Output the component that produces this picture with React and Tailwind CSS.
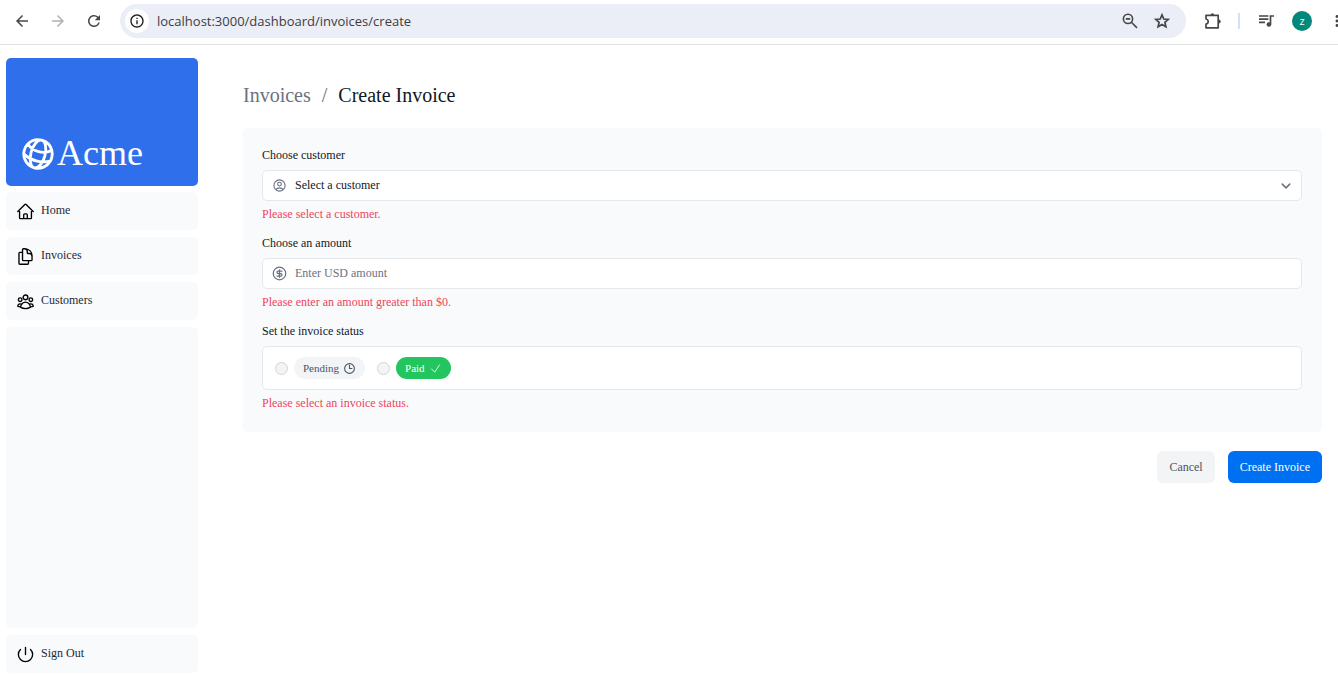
import {
  HiOutlineHome,
  HiOutlineDocumentDuplicate,
  HiOutlineUserGroup,
  HiOutlinePower,
  HiOutlineUserCircle,
  HiOutlineClock,
  HiOutlineCheck,
  HiOutlineChevronDown,
  HiOutlineGlobeAlt,
} from 'react-icons/hi2';
import { CircleDollarSign } from 'lucide-react';
import {
  MdArrowBack,
  MdArrowForward,
  MdRefresh,
  MdInfoOutline,
  MdMoreVert,
} from 'react-icons/md';

function PuzzleIcon() {
  return (
    <svg viewBox="0 0 18 18" className="size-[18px]" fill="none" stroke="currentColor" strokeWidth="1.7" strokeLinejoin="round" aria-hidden="true">
      <path d="M2 3.3H14.2V15.8H2V12.2C3.5 11.9 4.2 10.9 4.2 9.6S3.5 7.3 2 7Z" />
      <path d="M6.6 3a1.8 1.8 0 0 1 3.6 0ZM14.8 7.6a1.9 1.9 0 0 1 0 3.8Z" fill="currentColor" stroke="none" />
    </svg>
  );
}

function ZoomOutIcon() {
  return (
    <svg viewBox="0 0 18 18" className="size-[18px]" fill="none" stroke="currentColor" strokeWidth="1.6" aria-hidden="true">
      <circle cx="7" cy="6.9" r="4.6" />
      <path d="M10.4 10.3L16 15.9M4.8 6.9H9.2" />
    </svg>
  );
}

function StarIcon() {
  return (
    <svg viewBox="0 0 18 18" className="size-[18px]" fill="none" stroke="currentColor" strokeWidth="1.7" aria-hidden="true">
      <path d="M9 2.9L10.8 7L15.2 7.4L11.9 10.3L12.9 14.7L9 12.4L5.1 14.7L6.1 10.3L2.8 7.4L7.2 7Z" />
    </svg>
  );
}

function MediaIcon() {
  return (
    <svg viewBox="0 0 19 18" className="h-[18px] w-[19px]" fill="none" stroke="currentColor" strokeWidth="1.7" aria-hidden="true">
      <path d="M2 4H11.4M2 7.2H11.4M2 10.4H8M13.5 12.5V4H17" />
      <circle cx="11.9" cy="12.5" r="2.3" fill="currentColor" stroke="none" />
    </svg>
  );
}

function BrowserBar() {
  return (
    <header className="flex h-[45px] shrink-0 items-center overflow-hidden border-b border-[#dfe0e2] pb-[2px] pl-[13px] text-[#474747]">
      <button aria-label="Back" className="shrink-0"><MdArrowBack className="size-[18px]" /></button>
      <button aria-label="Forward" className="ml-[18px] shrink-0 text-[#b0b0b0]"><MdArrowForward className="size-[18px]" /></button>
      <button aria-label="Reload" className="ml-[18px] shrink-0"><MdRefresh className="size-[18px]" /></button>
      <div className="ml-[17px] flex h-[34px] flex-1 items-center rounded-full bg-[#ebeef7] pr-[15px] pl-[5px]">
        <button aria-label="Site information" className="flex size-6 shrink-0 items-center justify-center rounded-full bg-white text-[#1f1f1f]">
          <MdInfoOutline className="size-4" />
        </button>
        <input
          aria-label="Address"
          defaultValue="localhost:3000/dashboard/invoices/create"
          className="ml-2 min-w-0 flex-1 bg-transparent pt-px font-['Open_Sans','Noto_Sans',sans-serif] text-[13px] text-[#3c3d41] outline-none"
        />
        <button aria-label="Zoom out" className="shrink-0"><ZoomOutIcon /></button>
        <button aria-label="Bookmark" className="ml-[14px] shrink-0"><StarIcon /></button>
      </div>
      <button aria-label="Extensions" className="ml-[18px] shrink-0"><PuzzleIcon /></button>
      <span className="ml-4 h-4 w-[2px] shrink-0 bg-[#d0e1fb]" />
      <button aria-label="Media" className="ml-[17px] shrink-0"><MediaIcon /></button>
      <button aria-label="Profile" className="ml-4 flex size-5 shrink-0 items-center justify-center rounded-full bg-[#00897b] font-['Open_Sans',sans-serif] text-[11px] text-white">z</button>
      <button aria-label="Menu" className="-mr-2 ml-[16px] shrink-0"><MdMoreVert className="size-[18px]" /></button>
    </header>
  );
}

const links = [
  { name: 'Home', icon: HiOutlineHome },
  { name: 'Invoices', icon: HiOutlineDocumentDuplicate },
  { name: 'Customers', icon: HiOutlineUserGroup },
];

function Sidebar() {
  return (
    <nav className="flex w-48 shrink-0 flex-col">
      <a href="#" className="mb-[6px] flex h-32 items-end rounded-[5px] bg-[#2f6feb] px-4 pb-[13px] text-white">
        <HiOutlineGlobeAlt className="size-[38px] -ml-[3px] rotate-[15deg] stroke-[1.8]" />
        <span className="text-[36px] leading-10">Acme</span>
      </a>
      <div className="flex flex-1 flex-col gap-[7px]">
        {links.map(({ name, icon: Icon }) => (
          <a key={name} href="#" className="flex h-[38px] items-center gap-[6px] rounded-[5px] bg-[#f9fafb] px-[10px] text-[12px] text-gray-800">
            <Icon className="size-[19px] stroke-[1.7] text-black" />
            <span className="pb-[2px]">{name}</span>
          </a>
        ))}
        <div className="flex-1 rounded-[5px] bg-[#f9fafb]" />
        <button className="flex h-[38px] items-center gap-[6px] rounded-[5px] bg-[#f9fafb] px-[10px] text-[12px] text-gray-800">
          <HiOutlinePower className="size-[19px] stroke-[1.7] text-black" />
          <span className="pb-[2px]">Sign Out</span>
        </button>
      </div>
    </nav>
  );
}

function ErrorText({ children }) {
  return <p className="mt-[5px] text-[12px] leading-4 text-[#ef4460]">{children}</p>;
}

function InvoiceForm() {
  return (
    <form onSubmit={(e) => e.preventDefault()}>
      <div className="flex flex-col gap-[13px] rounded-[5px] bg-[#f9fafb] pt-[19px] pr-5 pb-[21px] pl-[19px] text-[12px] leading-4 text-gray-900">
        <div>
          <label htmlFor="customer" className="block">Choose customer</label>
          <div className="mt-[7px] flex h-[31px] items-center rounded-[5px] border border-gray-200 bg-white px-[9px]">
            <HiOutlineUserCircle className="size-[15px] shrink-0 stroke-[1.8] text-gray-500" />
            <select id="customer" defaultValue="" className="ml-2 flex-1 appearance-none bg-transparent pb-[2px] outline-none">
              <option value="">Select a customer</option>
            </select>
            <HiOutlineChevronDown className="size-3 shrink-0 stroke-3 text-gray-500" />
          </div>
          <ErrorText>Please select a customer.</ErrorText>
        </div>
        <div>
          <label htmlFor="amount" className="block">Choose an amount</label>
          <div className="mt-[7px] flex h-[31px] items-center rounded-[5px] border border-gray-200 bg-white px-[9px]">
            <CircleDollarSign className="size-[15px] shrink-0 text-gray-500" />
            <input id="amount" placeholder="Enter USD amount" className="ml-2 flex-1 bg-transparent pb-px outline-none placeholder:text-gray-500" />
          </div>
          <ErrorText>Please enter an amount greater than $0.</ErrorText>
        </div>
        <fieldset>
          <legend>Set the invoice status</legend>
          <div className="mt-[7px] flex h-11 items-center rounded-[5px] border border-gray-200 bg-white px-3">
            <input id="pending" type="radio" name="status" className="size-[13px] appearance-none rounded-full border border-gray-300 bg-gray-100" />
            <label htmlFor="pending" className="ml-[6px] flex h-[22px] items-center gap-1 rounded-full bg-gray-100 px-[9px] text-[11px] text-gray-600">
              Pending <HiOutlineClock className="size-[13px] stroke-2" />
            </label>
            <input id="paid" type="radio" name="status" className="ml-3 size-[13px] appearance-none rounded-full border border-gray-300 bg-gray-100" />
            <label htmlFor="paid" className="ml-[6px] flex h-[22px] items-center gap-1 rounded-full bg-[#22c55e] px-[9px] text-[11px] text-white">
              Paid <HiOutlineCheck className="size-[13px]" />
            </label>
          </div>
          <ErrorText>Please select an invoice status.</ErrorText>
        </fieldset>
      </div>
      <div className="mt-[19px] flex justify-end gap-[13px] text-[12px]">
        <a href="#" className="flex h-8 items-center rounded-md bg-gray-100 px-3 text-gray-600">Cancel</a>
        <button type="submit" className="flex h-8 items-center rounded-md bg-[#0070f3] px-3 text-white">Create Invoice</button>
      </div>
    </form>
  );
}

export default function App() {
  return (
    <div className="flex min-h-screen flex-col bg-white font-['Liberation_Serif',serif]">
      <BrowserBar />
      <div className="flex flex-1 gap-[45px] pt-[13px] pr-4 pb-[2px] pl-[6px]">
        <Sidebar />
        <main className="min-w-0 flex-1 pt-6">
          <nav aria-label="Breadcrumb" className="mb-[20px] flex gap-[11px] text-[20px] leading-[26px] text-gray-500">
            <a href="#">Invoices</a>
            <span>/</span>
            <a href="#" className="text-gray-900">Create Invoice</a>
          </nav>
          <InvoiceForm />
        </main>
      </div>
    </div>
  );
}
